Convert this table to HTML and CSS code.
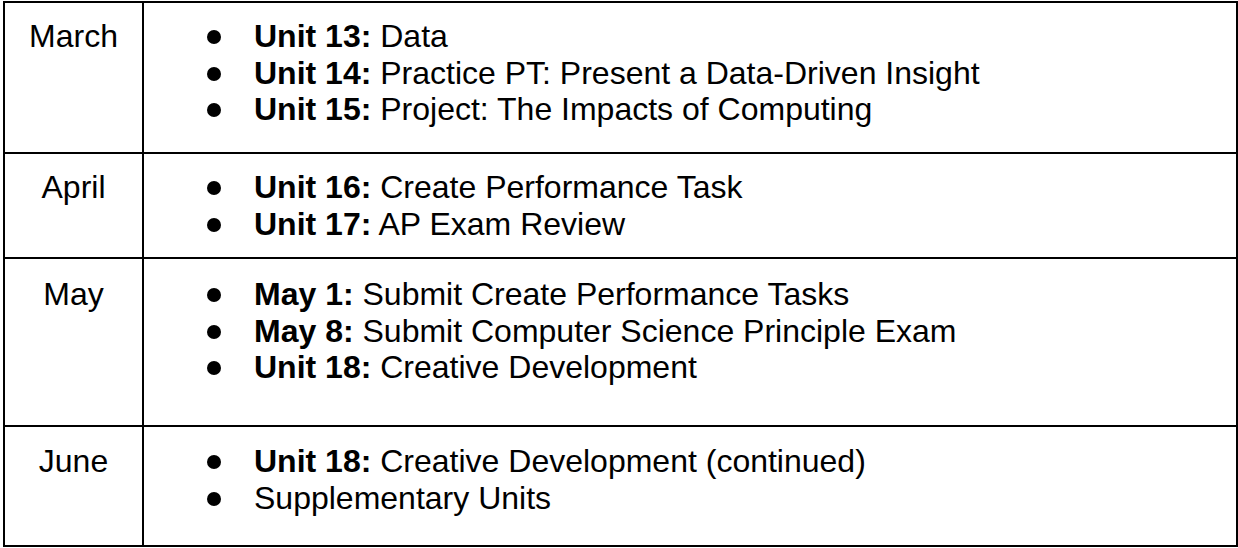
FILE: index.html
```html
<!DOCTYPE html>
<html>
<head>
<meta charset="utf-8">
<link rel="stylesheet" href="styles.css">
</head>
<body>
<div class="table">
  <div class="cell month">March</div>
  <div class="cell items">
    <ul class="list">
      <li><b>Unit 13:</b> Data</li>
      <li><b>Unit 14:</b> Practice PT: Present a Data-Driven Insight</li>
      <li><b>Unit 15:</b> Project: The Impacts of Computing</li>
    </ul>
  </div>
  <div class="cell month">April</div>
  <div class="cell items">
    <ul class="list">
      <li><b>Unit 16:</b> Create Performance Task</li>
      <li><b>Unit 17:</b> AP Exam Review</li>
    </ul>
  </div>
  <div class="cell month low">May</div>
  <div class="cell items low">
    <ul class="list">
      <li><b>May 1:</b> Submit Create Performance Tasks</li>
      <li><b>May 8:</b> Submit Computer Science Principle Exam</li>
      <li><b>Unit 18:</b> Creative Development</li>
    </ul>
  </div>
  <div class="cell month mid">June</div>
  <div class="cell items mid">
    <ul class="list">
      <li><b>Unit 18:</b> Creative Development (continued)</li>
      <li>Supplementary Units</li>
    </ul>
  </div>
</div>
</body>
</html>
```
FILE: styles.css
```css
html, body {
  margin: 0;
  padding: 0;
  background: #fff;
}
body {
  padding: 1px 0 0 3px;
  font-family: "Liberation Sans", Arial, sans-serif;
  font-size: 32px;
  line-height: 36.6px;
  color: #000;
}
.table {
  width: 1235px;
  height: 546px;
  box-sizing: border-box;
  display: grid;
  grid-template-columns: 137px 1092px;
  grid-template-rows: 149px 103px 166px 118px;
  gap: 2px;
  padding: 2px;
  background: #000;
}
.cell {
  background: #fff;
  padding-top: 15px;
}
.cell.low {
  padding-top: 17px;
}
.cell.mid {
  padding-top: 16px;
}
.month {
  text-align: center;
}
.list {
  list-style: none;
  margin: 0;
  padding: 0 0 0 110px;
}
.list li {
  position: relative;
}
.list li::before {
  content: "";
  position: absolute;
  left: -47px;
  top: 12px;
  width: 14px;
  height: 14px;
  border-radius: 50%;
  background: #000;
}
b {
  font-weight: bold;
}
```
